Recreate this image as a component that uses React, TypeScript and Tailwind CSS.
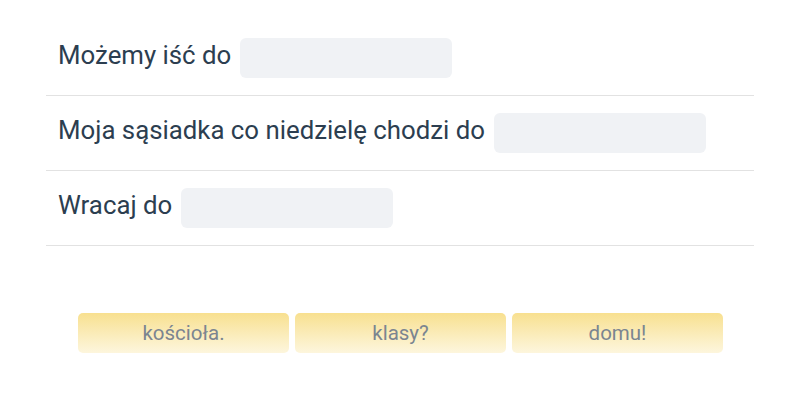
import React from "react";

const rows = [
  { before: "Możemy iść do" },
  { before: "Moja sąsiadka co niedzielę chodzi do" },
  { before: "Wracaj do" },
];

const answers = ["kościoła.", "klasy?", "domu!"];

export default function App() {
  return (
    <div className="w-[800px] h-[400px] bg-white font-['Roboto',sans-serif]">
      <div className="mx-[46px] pt-[21px]">
        {/* Sentences with blanks */}
        {rows.map((row, i) => (
          <div
            key={i}
            className="flex items-center gap-[9px] pl-3 py-[17px] border-b border-[#e2e2e2]"
          >
            <span className="text-[25.8px] leading-none text-[#2c3e50] -mt-1">{row.before}</span>
            <div className="w-[212px] h-10 rounded-md bg-[#f0f2f5]" />
          </div>
        ))}

        {/* Answer chips */}
        <div className="flex justify-center gap-[6px] mt-[67px] pl-[1px]">
          {answers.map((a) => (
            <button
              key={a}
              className="w-[211px] h-10 rounded-[5px] bg-gradient-to-b from-[#f8e08f] to-[#fdf6dd] text-[20.5px] text-[#7b8590]"
            >
              {a}
            </button>
          ))}
        </div>
      </div>
    </div>
  );
}
